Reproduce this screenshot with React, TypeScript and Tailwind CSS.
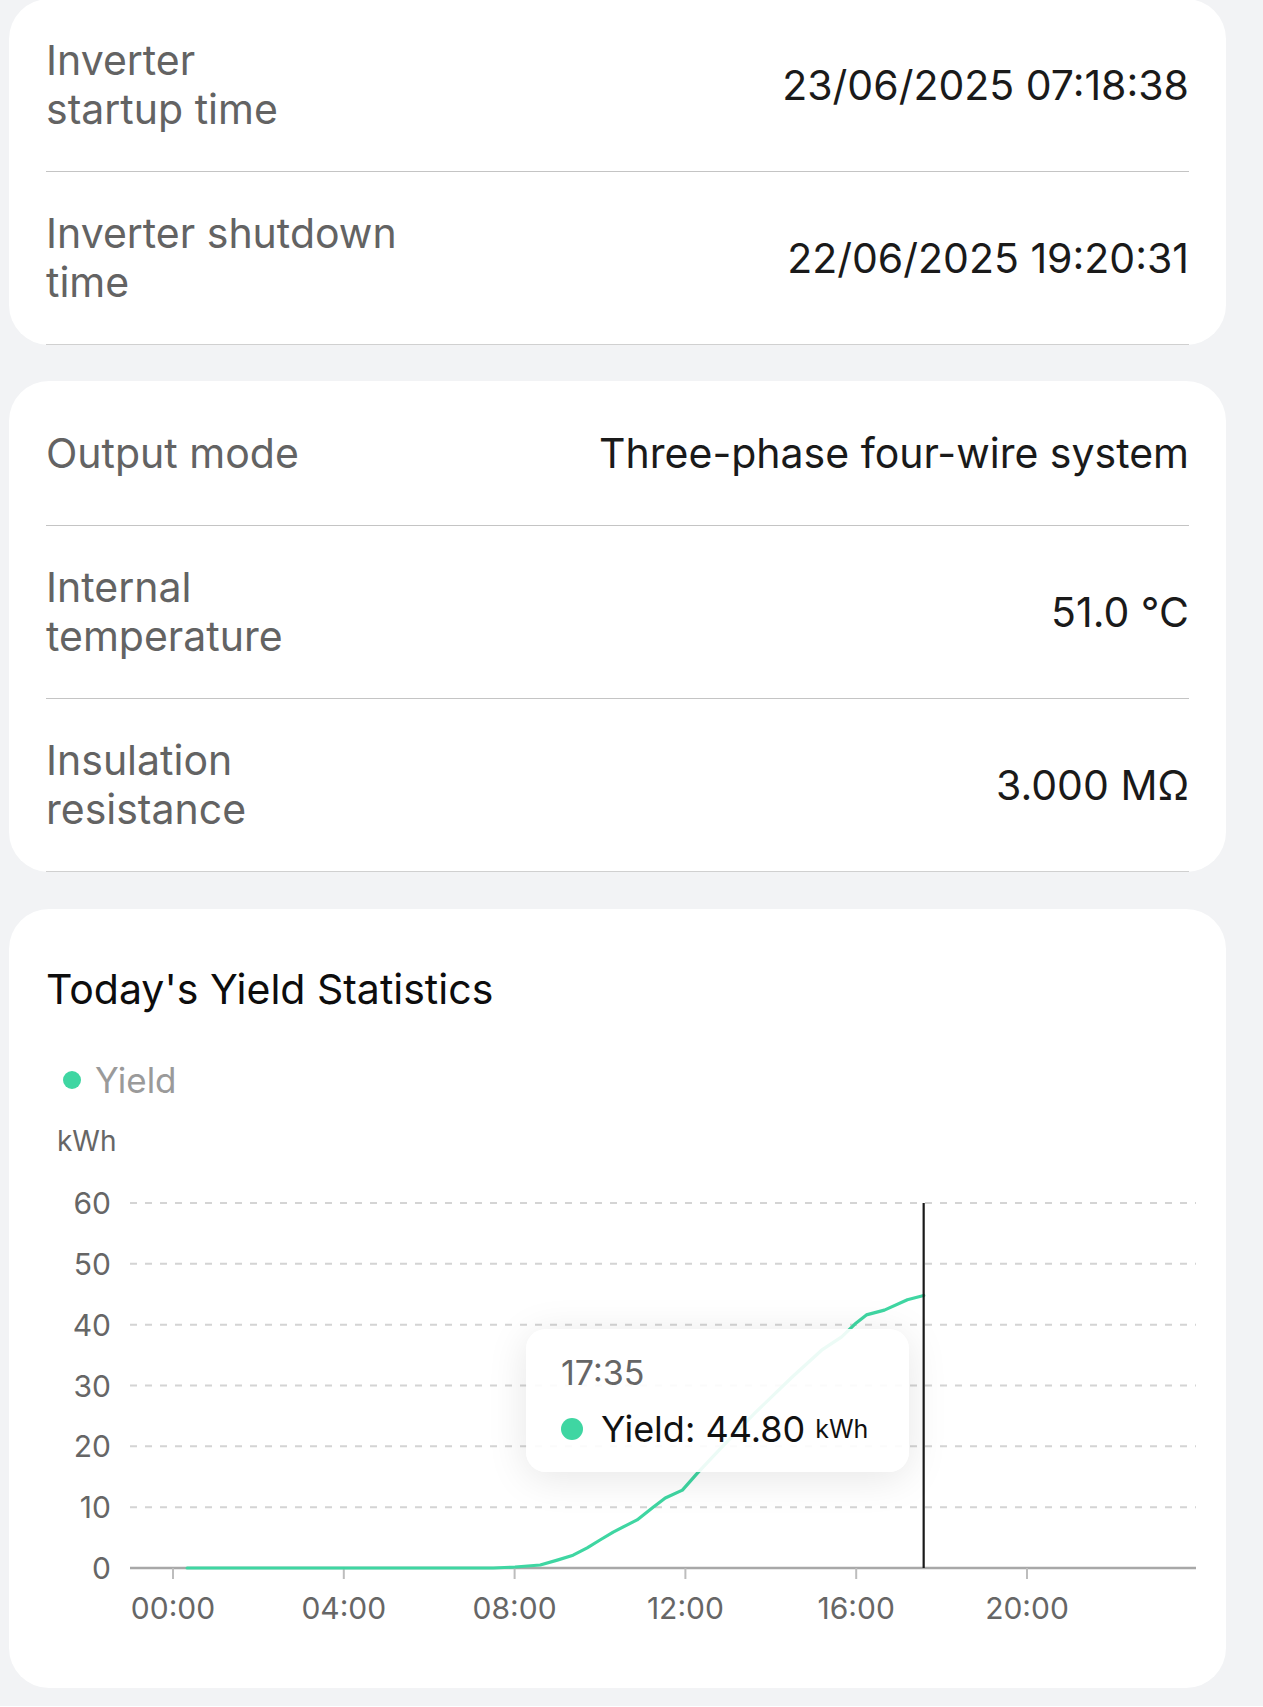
import React from "react";

type Item = { label: string[]; value: string };

const first: Item[] = [
  { label: ["Inverter", "startup time"], value: "23/06/2025 07:18:38" },
  { label: ["Inverter shutdown", "time"], value: "22/06/2025 19:20:31" },
];

const second: Item[] = [
  { label: ["Output mode"], value: "Three-phase four-wire system" },
  { label: ["Internal", "temperature"], value: "51.0 °C" },
  { label: ["Insulation", "resistance"], value: "3.000 MΩ" },
];

// hours -> kWh, read off the reference curve
const points: [number, number][] = [
  [0.33, 0], [7.5, 0], [8.01, 0.16], [8.6, 0.5], [9.0, 1.3], [9.37, 2.1], [9.7, 3.3],
  [10.0, 4.6], [10.31, 5.9], [10.64, 7.1], [10.87, 7.9], [11.23, 9.9], [11.53, 11.5],
  [11.93, 12.8], [12.28, 15.6], [12.86, 19.9], [13.63, 25.5], [14.5, 31.4], [15.19, 35.8],
  [15.66, 38.0], [16.0, 40.3], [16.24, 41.6], [16.66, 42.4], [17.2, 44.1], [17.58, 44.8],
];

const X0 = 164;
const HOUR = 42.7;
const Y0 = 406;
const UNIT = 6.083;
const px = (h: number) => X0 + h * HOUR;
const py = (v: number) => Y0 - v * UNIT;

function InfoCard({ items, className }: { items: Item[]; className?: string }) {
  return (
    <div className={"rounded-[40px] bg-white px-[37px] " + (className ?? "")}>
      {items.map((it, idx) => (
        <div key={idx}>
          <div className="flex min-h-[144px] items-center justify-between gap-6 py-[37px]">
            <div className="text-[41px] leading-[49px] text-[#636363]">
              {it.label.map((l, i) => (
                <div key={i}>{l}</div>
              ))}
            </div>
            <div className="text-right text-[41px] leading-[49px] text-[#1a1a1a]">{it.value}</div>
          </div>
          <div className={idx === items.length - 1 ? "-mb-px h-px bg-[#d0d0d0]" : "h-px bg-[#c4c4c4]"} />
        </div>
      ))}
    </div>
  );
}

function YieldChart() {
  const line = points.map(([h, v]) => `${px(h).toFixed(1)},${py(v).toFixed(1)}`).join(" ");
  const grid = [60, 50, 40, 30, 20, 10];
  const ticks = ["00:00", "04:00", "08:00", "12:00", "16:00", "20:00"];
  return (
    <div className="relative -mx-[37px] mt-[3px]">
      <svg width="1217" height="470" viewBox="0 0 1217 470" className="block">
        {grid.map((g) => (
          <line key={g} x1="121" x2="1187" y1={py(g)} y2={py(g)} stroke="#d4d4d4" strokeWidth="2" strokeDasharray="7 8" />
        ))}
        {[60, 50, 40, 30, 20, 10, 0].map((g) => (
          <text key={g} x="102" y={py(g)} textAnchor="end" dominantBaseline="central" fontSize="30" fill="#666" fontFamily="Inter, sans-serif">
            {g}
          </text>
        ))}
        <line x1="121" x2="1187" y1={Y0} y2={Y0} stroke="#a8a8a8" strokeWidth="2.5" />
        {ticks.map((t, i) => (
          <g key={t}>
            <line x1={X0 + i * 4 * HOUR} x2={X0 + i * 4 * HOUR} y1={Y0} y2={Y0 + 11} stroke="#bdbdbd" strokeWidth="2" />
            <text x={X0 + i * 4 * HOUR} y="446" textAnchor="middle" dominantBaseline="central" fontSize="30" fill="#666" fontFamily="Inter, sans-serif">
              {t}
            </text>
          </g>
        ))}
        <polyline points={line} fill="none" stroke="#3fd6a2" strokeWidth="3.2" strokeLinejoin="round" strokeLinecap="round" />
        <line x1={px(17.58)} x2={px(17.58)} y1={py(60)} y2={Y0} stroke="#1a1a1a" strokeWidth="2.2" />
      </svg>
      <div className="absolute left-[517px] top-[167px] w-[383px] rounded-[20px] bg-white/90 px-[35px] pt-[22px] pb-[21px] shadow-[0_6px_40px_rgba(0,0,0,0.10)]">
        <div className="text-[34px] leading-[44px] text-[#666]">17:35</div>
        <div className="mt-[12px] flex items-center text-[36px] leading-[44px] text-[#111]">
          <span className="mr-[18px] inline-block h-[22px] w-[22px] rounded-full bg-[#3fd6a2]" />
          <span>Yield: 44.80</span>
          <span className="ml-[10px] text-[25px]">kWh</span>
        </div>
      </div>
    </div>
  );
}

export default function App() {
  return (
    <div className="min-h-[1707px] w-[1263px] bg-[#f2f3f5] pl-[9px] pr-[37px] font-['Inter',sans-serif]">
      <InfoCard items={first} className="-mt-[1px]" />
      <InfoCard items={second} className="mt-[37px]" />
      <div className="mt-[38px] rounded-[40px] bg-white px-[37px] pt-[56px] pb-[56px]">
        <div className="text-[41px] leading-[49px] text-[#0d0d0d]">Today's Yield Statistics</div>
        <div className="mt-[46px] flex h-[40px] items-center pl-[17px]">
          <span className="inline-block h-[18px] w-[18px] rounded-full bg-[#3fd6a2]" />
          <span className="ml-[14px] text-[35px] leading-[40px] text-[#9a9a9a]">Yield</span>
        </div>
        <div className="mt-[23px] pl-[11px] text-[28px] leading-[36px] text-[#666]">kWh</div>
        <YieldChart />
      </div>
    </div>
  );
}
